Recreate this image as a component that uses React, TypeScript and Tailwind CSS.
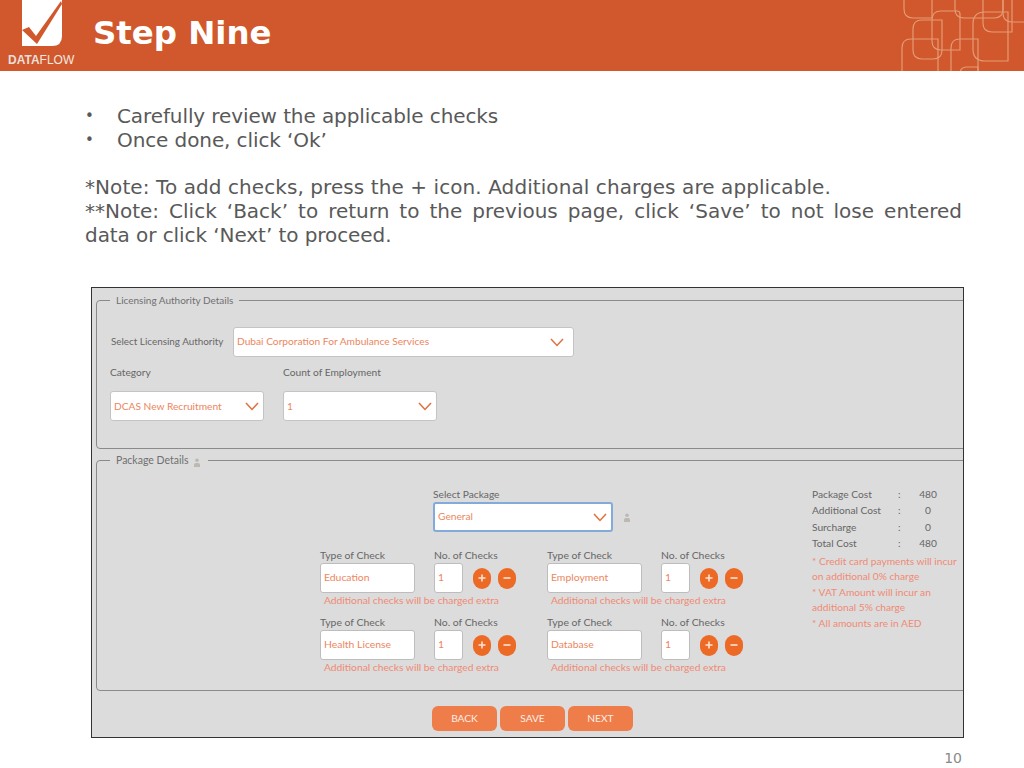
import React from "react";

const gothic = "font-['Lato',sans-serif]";

function Chevron() {
  return (
    <svg width="14" height="9" viewBox="0 0 14 9" fill="none" className="shrink-0">
      <path d="M1 1l6 6.5L13 1" stroke="#e0703f" strokeWidth="1.5" />
    </svg>
  );
}

function Select({ value, className }: { value: string; className: string }) {
  return (
    <div className={`flex h-[30px] items-center justify-between rounded-[3px] bg-white pl-[3px] text-[10.2px] text-[#ec8660] ${className}`}>
      <span>{value}</span>
      <Chevron />
    </div>
  );
}

function SmallPerson({ className }: { className: string }) {
  return (
    <svg width="8" height="9" viewBox="0 0 8 9" className={className}>
      <circle cx="4" cy="2.2" r="1.8" fill="#bdb8b2" />
      <path d="M1 9V6.5Q1 5 3 5h2q2 0 2 1.5V9z" fill="#bdb8b2" />
    </svg>
  );
}

function RoundIcon({ minus }: { minus?: boolean }) {
  return (
    <div className="flex h-[21px] w-[18px] items-center justify-center rounded-full bg-[#ec6a25]">
      <svg width="10" height="10" viewBox="0 0 10 10">
        <path d={minus ? "M1.5 5h7" : "M1.5 5h7M5 1.5v7"} stroke="#fbe3d4" strokeWidth="1.6" />
      </svg>
    </div>
  );
}

function CheckItem({ type }: { type: string }) {
  return (
    <div className="w-[227px]">
      <div className="flex h-[15px] items-center text-[10.4px] text-[#666]">
        <span className="w-[114px]">Type of Check</span>
        <span>No. of Checks</span>
      </div>
      <div className="flex items-center">
        <div className="flex h-[30px] w-[95px] items-center rounded-[3px] border border-[#bdbdbd] bg-white pl-[3px] text-[10.4px] text-[#ec8660]">{type}</div>
        <div className="ml-[19px] flex h-[30px] w-[29px] items-center rounded-[3px] border border-[#bdbdbd] bg-white pl-[3px] text-[10.4px] text-[#ec8660]">1</div>
        <div className="ml-[10px]"><RoundIcon /></div>
        <div className="ml-[7px]"><RoundIcon minus /></div>
      </div>
      <div className="flex h-[16px] items-center pl-[4px] text-[10.27px] text-[#f08a74]">Additional checks will be charged extra</div>
    </div>
  );
}

function CostRow({ label, value }: { label: string; value: string }) {
  return (
    <div className="flex h-[16.6px] items-center text-[10.2px] text-[#666]">
      <span className="w-[86px]">{label}</span>
      <span className="w-[10px]">:</span>
      <span className="w-[40px] text-center">{value}</span>
    </div>
  );
}

// x, y, w, h and corner radii tl, tr, br, bl
const patternShapes = [
  [904, -20, 28, 38, 9, 9, 0, 9],
  [932, 11, 28, 39, 9, 3, 0, 9],
  [913, 20, 29, 39, 9, 0, 9, 9],
  [902, 39, 36, 44, 9, 0, 9, 9],
  [951, 39, 27, 44, 9, 0, 9, 9],
  [973, 12, 35, 49, 12, 0, 0, 12],
  [983, -10, 29, 42, 9, 9, 0, 9],
  [955, -20, 48, 38, 9, 9, 9, 9],
  [1003, -10, 30, 32, 9, 9, 9, 9],
  [960, 67, 18, 24, 7, 0, 0, 7],
];

function shapePath([x, y, w, h, tl, tr, br, bl]: number[]) {
  return `M${x + tl} ${y}H${x + w - tr}Q${x + w} ${y} ${x + w} ${y + tr}V${y + h - br}Q${x + w} ${y + h} ${x + w - br} ${y + h}H${x + bl}Q${x} ${y + h} ${x} ${y + h - bl}V${y + tl}Q${x} ${y} ${x + tl} ${y}Z`;
}

function Pattern() {
  return (
    <svg width="144" height="71" viewBox="880 0 144 71" fill="none" className="absolute right-0 top-0">
      {patternShapes.map((s, i) => (
        <path key={i} d={shapePath(s)} stroke="#e59a76" strokeWidth="1.2" />
      ))}
    </svg>
  );
}

function Logo() {
  return (
    <div className="flex w-[93px] shrink-0 flex-col pl-[8px]">
      <svg width="42" height="50" viewBox="22 0 42 50" className="ml-[14px]">
        <path d="M22 0h40v36q0 10-10 10H22z" fill="#fff" />
        <path d="M22 30l7-3 7 9L61 1l1 3-25 40z" fill="#d0582c" />
      </svg>
      <div className="mt-[3px] font-['Liberation_Sans',sans-serif] text-[12px] leading-[14px] text-[#f3e8e2]">
        <span className="font-bold text-[#e9dfda]">DATA</span>FLOW
      </div>
    </div>
  );
}

export default function App() {
  return (
    <div className="h-[768px] w-[1024px] overflow-hidden bg-white font-['DejaVu_Sans',sans-serif]">
      <header className="relative flex h-[71px] items-start bg-[#d0582c]">
        <Logo />
        <h1 className="pt-[12px] text-[32.4px] font-bold leading-[42px] text-white">Step Nine</h1>
        <Pattern />
      </header>

      <section className="px-[85px] pt-[33px] text-[20px] leading-[24px] text-[#595959]">
        <ul className="tracking-[-0.1px]">
          <li className="flex"><span className="w-[32px] text-[15px]">•</span>Carefully review the applicable checks</li>
          <li className="flex"><span className="w-[32px] text-[15px]">•</span>Once done, click ‘Ok’</li>
        </ul>
        <p className="mt-[23px] w-[877px] tracking-[0.08px]">*Note: To add checks, press the + icon. Additional charges are applicable.</p>
        <p className="w-[877px] text-justify [text-align-last:justify]">**Note: Click ‘Back’ to return to the previous page, click ‘Save’ to not lose entered</p>
        <p className="w-[877px] tracking-[-0.07px]">data or click ‘Next’ to proceed.</p>
      </section>

      <div className={`ml-[91px] mt-[40px] h-[451px] w-[873px] overflow-hidden border border-[#333] bg-[#dcdcdc] ${gothic}`}>
        <fieldset className="ml-[4px] mt-[3px] h-[158px] w-[900px] rounded-[4px] border border-[#8a8a8a] pl-[13px]">
          <legend className="ml-0 px-[6px] text-[10px] leading-[18px] text-[#707070]">Licensing Authority Details</legend>
          <div className="flex items-center pt-[18px]">
            <span className="w-[123px] pb-[2px] pl-[1px] text-[9.9px] text-[#666]">Select Licensing Authority</span>
            <Select value="Dubai Corporation For Ambulance Services" className="w-[341px] border border-[#c4c4c4] pr-[9px]" />
          </div>
          <div className="mt-[8px] flex text-[10.2px] text-[#666]">
            <span className="w-[173px]">Category</span>
            <span>Count of Employment</span>
          </div>
          <div className="mt-[11px] flex gap-[19px]">
            <Select value="DCAS New Recruitment" className="w-[154px] border border-[#c4c4c4] pr-[4px]" />
            <Select value="1" className="w-[154px] border border-[#c4c4c4] pr-[4px]" />
          </div>
        </fieldset>

        <fieldset className="ml-[4px] mt-[2px] h-[240px] w-[900px] rounded-[4px] border border-[#8a8a8a]">
          <legend className="ml-[13px] flex items-center gap-[5px] py-0 pl-[6px] pr-[7px] text-[10.5px] leading-[18px] text-[#707070]">
            Package Details
            <SmallPerson className="mt-[5px]" />
          </legend>
          <div className="flex pl-[223px]">
            <div className="w-[492px]">
              <div className="ml-[113px] pt-[18px] text-[10.2px] leading-[15px] text-[#666]">Select Package</div>
              <div className="ml-[113px] flex items-center">
                <Select value="General" className="w-[180px] border-2 border-[#82abdc] pr-[4px]" />
                <SmallPerson className="ml-[10px]" />
              </div>
              <div className="mt-[16px] grid w-[454px] grid-cols-2">
                <CheckItem type="Education" />
                <CheckItem type="Employment" />
                <div className="mt-[6px]"><CheckItem type="Health License" /></div>
                <div className="mt-[6px]"><CheckItem type="Database" /></div>
              </div>
            </div>
            <div className="w-[150px] pt-[17px]">
              <CostRow label="Package Cost" value="480" />
              <CostRow label="Additional Cost" value="0" />
              <CostRow label="Surcharge" value="0" />
              <CostRow label="Total Cost" value="480" />
              <div className="mt-[2px] text-[10.2px] leading-[15px] text-[#f08a74]">
                <p>* Credit card payments will incur on additional 0% charge</p>
                <p className="mt-[1px]">* VAT Amount will incur an additional 5% charge</p>
                <p className="mt-[1px]">* All amounts are in AED</p>
              </div>
            </div>
          </div>
        </fieldset>

        <div className="mt-[15px] flex justify-start gap-[3px] pl-[340px]">
          {["BACK", "SAVE", "NEXT"].map((b) => (
            <button key={b} className="flex h-[25px] w-[65px] items-center justify-center rounded-[6px] bg-[#ee7d4a] text-[10.2px] text-[#fdeee6]">{b}</button>
          ))}
        </div>
      </div>

      <div className="mt-[10px] w-[962px] text-right text-[14px] leading-[20px] text-[#8a8a8a]">10</div>
    </div>
  );
}
